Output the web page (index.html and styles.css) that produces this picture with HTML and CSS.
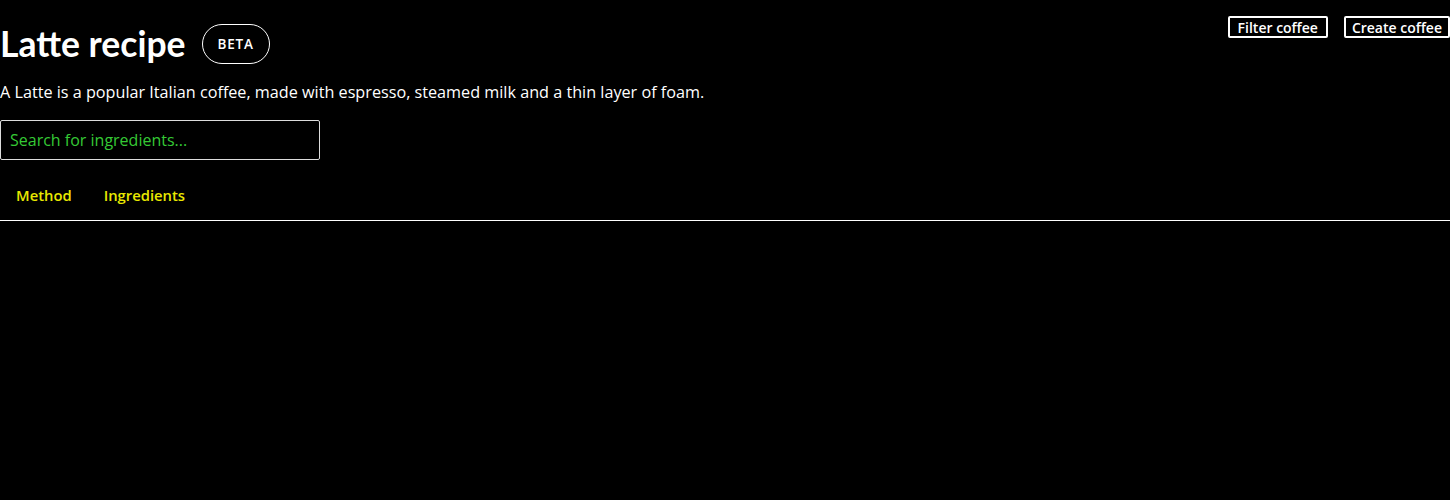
FILE: index.html
```html
<!DOCTYPE html>
<html>
<head>
<meta charset="utf-8">
<link rel="stylesheet" href="styles.css">
</head>
<body>
<div class="page">
  <div class="actions">
    <button class="btn">Filter coffee</button>
    <button class="btn btn-tight">Create coffee</button>
  </div>
  <header class="head">
    <h1 class="title">Latte recipe</h1>
    <span class="badge">BETA</span>
  </header>
  <p class="desc">A Latte is a popular Italian coffee, made with espresso, steamed milk and a thin layer of foam.</p>
  <input class="search" type="text" placeholder="Search for ingredients...">
  <nav class="tabs">
    <a class="tab">Method</a>
    <a class="tab">Ingredients</a>
  </nav>
</div>
</body>
</html>
```
FILE: styles.css
```css
html, body {
  margin: 0;
  background: #000;
  color: #fff;
  font-family: "Open Sans", "Noto Sans", sans-serif;
  overflow: hidden;
}
.page {
  position: relative;
  height: 500px;
}
.actions {
  position: absolute;
  top: 16px;
  right: 0;
  display: flex;
  gap: 16px;
}
.btn {
  background: #000;
  color: #fff;
  border: 2px solid #fff;
  border-radius: 2px;
  font-family: "Open Sans", sans-serif;
  font-weight: 600;
  font-size: 14px;
  line-height: 17px;
  padding: 0 8px;
  height: 22px;
}
.btn-tight {
  padding: 0 6px;
}
.head {
  display: flex;
  align-items: center;
  gap: 16px;
  padding-top: 24px;
}
.title {
  margin: 0;
  font-family: "Lato", "Open Sans", sans-serif;
  font-weight: 700;
  font-size: 35.5px;
  line-height: 40px;
}
.badge {
  display: inline-flex;
  align-items: center;
  justify-content: center;
  height: 40px;
  width: 68px;
  box-sizing: border-box;
  border: 1px solid #fff;
  border-radius: 20px;
  font-size: 13.5px;
  font-weight: 600;
  letter-spacing: 0.8px;
}
.desc {
  margin: 16px 0 0;
  font-size: 16.2px;
  line-height: 24px;
}
.search {
  display: block;
  margin-top: 16px;
  width: 320px;
  height: 40px;
  box-sizing: border-box;
  background: #000;
  border: 1px solid #ddd;
  border-radius: 2px;
  padding: 0 9px;
  font-family: "Open Sans", sans-serif;
  font-size: 16px;
  color: #fff;
}
.search::placeholder {
  color: #35c935;
}
.tabs {
  display: flex;
  gap: 32px;
  padding: 0 16px 15px;
  height: 61px;
  box-sizing: border-box;
  align-items: flex-end;
  border-bottom: 1px solid #fff;
}
.tab {
  color: #e8e800;
  font-size: 14.8px;
  font-weight: 600;
  line-height: 20px;
}
```
